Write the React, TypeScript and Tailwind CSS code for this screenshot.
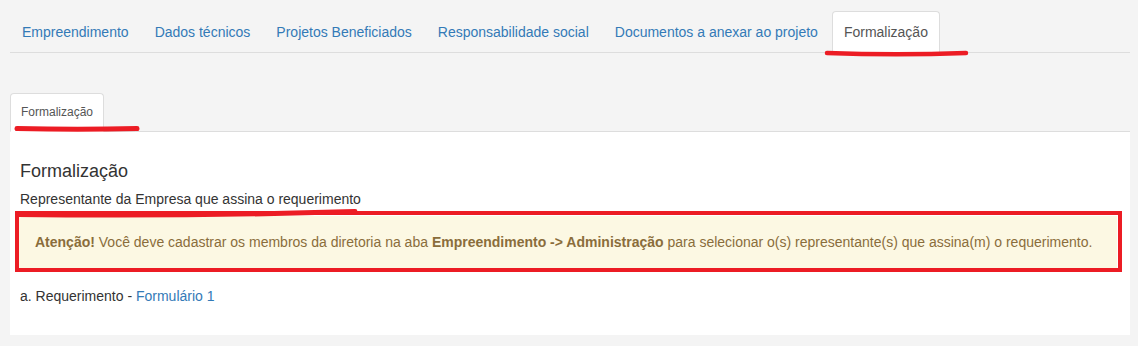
const topTabs = [
  'Empreendimento',
  'Dados técnicos',
  'Projetos Beneficiados',
  'Responsabilidade social',
  'Documentos a anexar ao projeto',
  'Formalização',
];

const App = () => {
  const active = 'Formalização';

  return (
    <div
      className="relative min-h-[346px] bg-[#f4f4f4] pl-[10px] pr-[8px] pt-[11px] text-[14px] text-[#333]"
      style={{ fontFamily: '"Liberation Sans", Arial, sans-serif' }}
    >
      {/* abas principais */}
      <ul className="flex border-b border-[#dddddd]">
        {topTabs.map((tab) => (
          <li key={tab} className="-mb-px mr-[2px]">
            <a
              className={
                tab === active
                  ? 'block rounded-t-[4px] border border-[#dddddd] border-b-white bg-white px-[11px] py-[10px] leading-[20px] text-[#555555]'
                  : 'block rounded-t-[4px] border border-transparent px-[11px] py-[10px] leading-[20px] text-[#337ab7]'
              }
            >
              {tab}
            </a>
          </li>
        ))}
      </ul>

      {/* sub abas */}
      <ul className="mt-[40px] flex border-b border-[#dddddd]">
        <li className="-mb-px">
          <a className="block rounded-t-[4px] border border-[#dddddd] border-b-white bg-white px-[10px] py-[10px] text-[12px] leading-[17px] text-[#555555]">
            Formalização
          </a>
        </li>
      </ul>

      <div className="bg-white px-[10px] pb-[29px] pt-[29px]">
        <h4 className="text-[18px] leading-[20px] text-[#333]">Formalização</h4>
        <p className="mt-[8px] leading-[20px]">Representante da Empresa que assina o requerimento</p>

        <div className="-ml-[5px] -mr-[2px] mt-[2px] border-[4px] border-[#ec1c24] bg-white">
          <div className="mr-px mt-px bg-[#fcf8e3] px-[16px] pb-[16px] pt-[16px] leading-[20px] text-[#8a6d3b]">
            <strong>Atenção!</strong> Você deve cadastrar os membros da diretoria na aba{' '}
            <strong>Empreendimento -&gt; Administração</strong> para selecionar o(s) representante(s) que
            assina(m) o requerimento.
          </div>
        </div>

        <p className="mt-[14px] leading-[20px]">
          a. Requerimento - <a className="text-[#337ab7]">Formulário 1</a>
        </p>
      </div>

      {/* marcações em vermelho */}
      <svg className="pointer-events-none absolute left-0 top-0" width="1138" height="346">
        <path d="M 827 53 Q 896 55.5 966 53" stroke="#ec1c24" strokeWidth="4.5" strokeLinecap="round" fill="none" />
        <path d="M 17 128.5 Q 78 130 137 128.5" stroke="#ec1c24" strokeWidth="5" strokeLinecap="round" fill="none" />
        <path d="M 18 214.5 Q 190 216.5 355 211.5" stroke="#ec1c24" strokeWidth="5" strokeLinecap="round" fill="none" />
      </svg>
    </div>
  );
};

export default App;
